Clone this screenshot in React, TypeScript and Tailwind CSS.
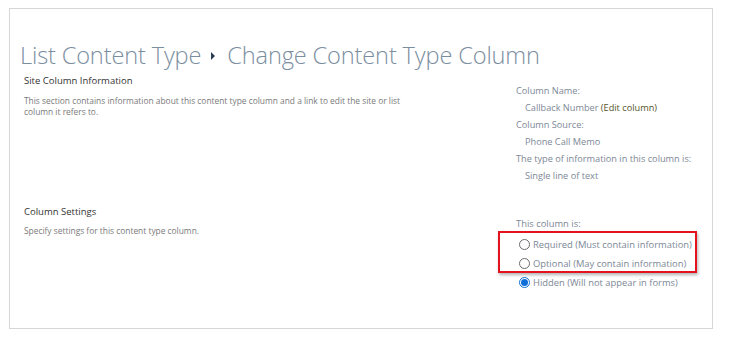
export default function App() {
  return (
    <div className="w-[731px] h-[337px] bg-white pt-[8px] pl-[9px] font-['Open_Sans',sans-serif]">
      <div className="w-[704px] h-[321px] border border-[#d6d6d6] relative">
        <h1 className="pl-[10px] pt-[31px] text-[23.6px] leading-[30px] font-light text-[#7b8ea0] flex items-center tracking-[-0.15px]">
          <span>List Content Type</span>
          <svg width="6" height="8" viewBox="0 0 6 8" className="ml-[9px] mr-[11px] mt-[2px]">
            <path d="M1 0 L5 4 L1 8 Z" fill="#2b3e52" />
          </svg>
          <span>Change Content Type Column</span>
        </h1>

        <div className="flex mt-[4px]">
          <div className="w-[506px] pl-[14px]">
            <div className="text-[9.5px] text-[#333] leading-[14px]">Site Column Information</div>
            <p className="mt-[7px] text-[8.4px] leading-[11px] text-[#7a7a7a] w-[395px]">
              This section contains information about this content type column and a link to edit the site or list column it refers to.
            </p>
          </div>
          <div className="pt-[8px] text-[9.2px] leading-[17px] text-[#7d8896]">
            <div>Column Name:</div>
            <div className="pl-[9px]">
              Callback Number <span className="text-[#545426]">(Edit column)</span>
            </div>
            <div>Column Source:</div>
            <div className="pl-[9px]">Phone Call Memo</div>
            <div>The type of information in this column is:</div>
            <div className="pl-[9px]">Single line of text</div>
          </div>
        </div>

        <div className="flex mt-[21px]">
          <div className="w-[506px] pl-[14px]">
            <div className="text-[9.5px] text-[#333] leading-[14px]">Column Settings</div>
            <p className="mt-[6px] text-[8.4px] leading-[11px] text-[#7a7a7a]">
              Specify settings for this content type column.
            </p>
          </div>
          <div className="pt-[9px] text-[9.4px] leading-[19px] text-[#7d8896]">
            <div>This column is:</div>
            <div className="relative pl-[3px] mt-[2px]">
              <div className="absolute left-[-18px] top-[-4px] w-[199px] h-[42px] border-2 border-[#e3121c] shadow-[1px_2px_3px_rgba(0,0,0,0.3)]" />
              {[
                ["Required (Must contain information)", false],
                ["Optional (May contain information)", false],
                ["Hidden (Will not appear in forms)", true],
              ].map(([label, on]) => (
                <div key={label as string} className="flex items-center gap-[3px]">
                  {on ? (
                    <span className="w-[11px] h-[11px] rounded-full border border-[#0f6fd8] bg-white flex items-center justify-center">
                      <span className="w-[7px] h-[7px] rounded-full bg-[#0f6fd8]" />
                    </span>
                  ) : (
                    <span className="w-[11px] h-[11px] rounded-full border border-[#6d6d6d] bg-white" />
                  )}
                  <span>{label as string}</span>
                </div>
              ))}
            </div>
          </div>
        </div>
      </div>
    </div>
  );
}
